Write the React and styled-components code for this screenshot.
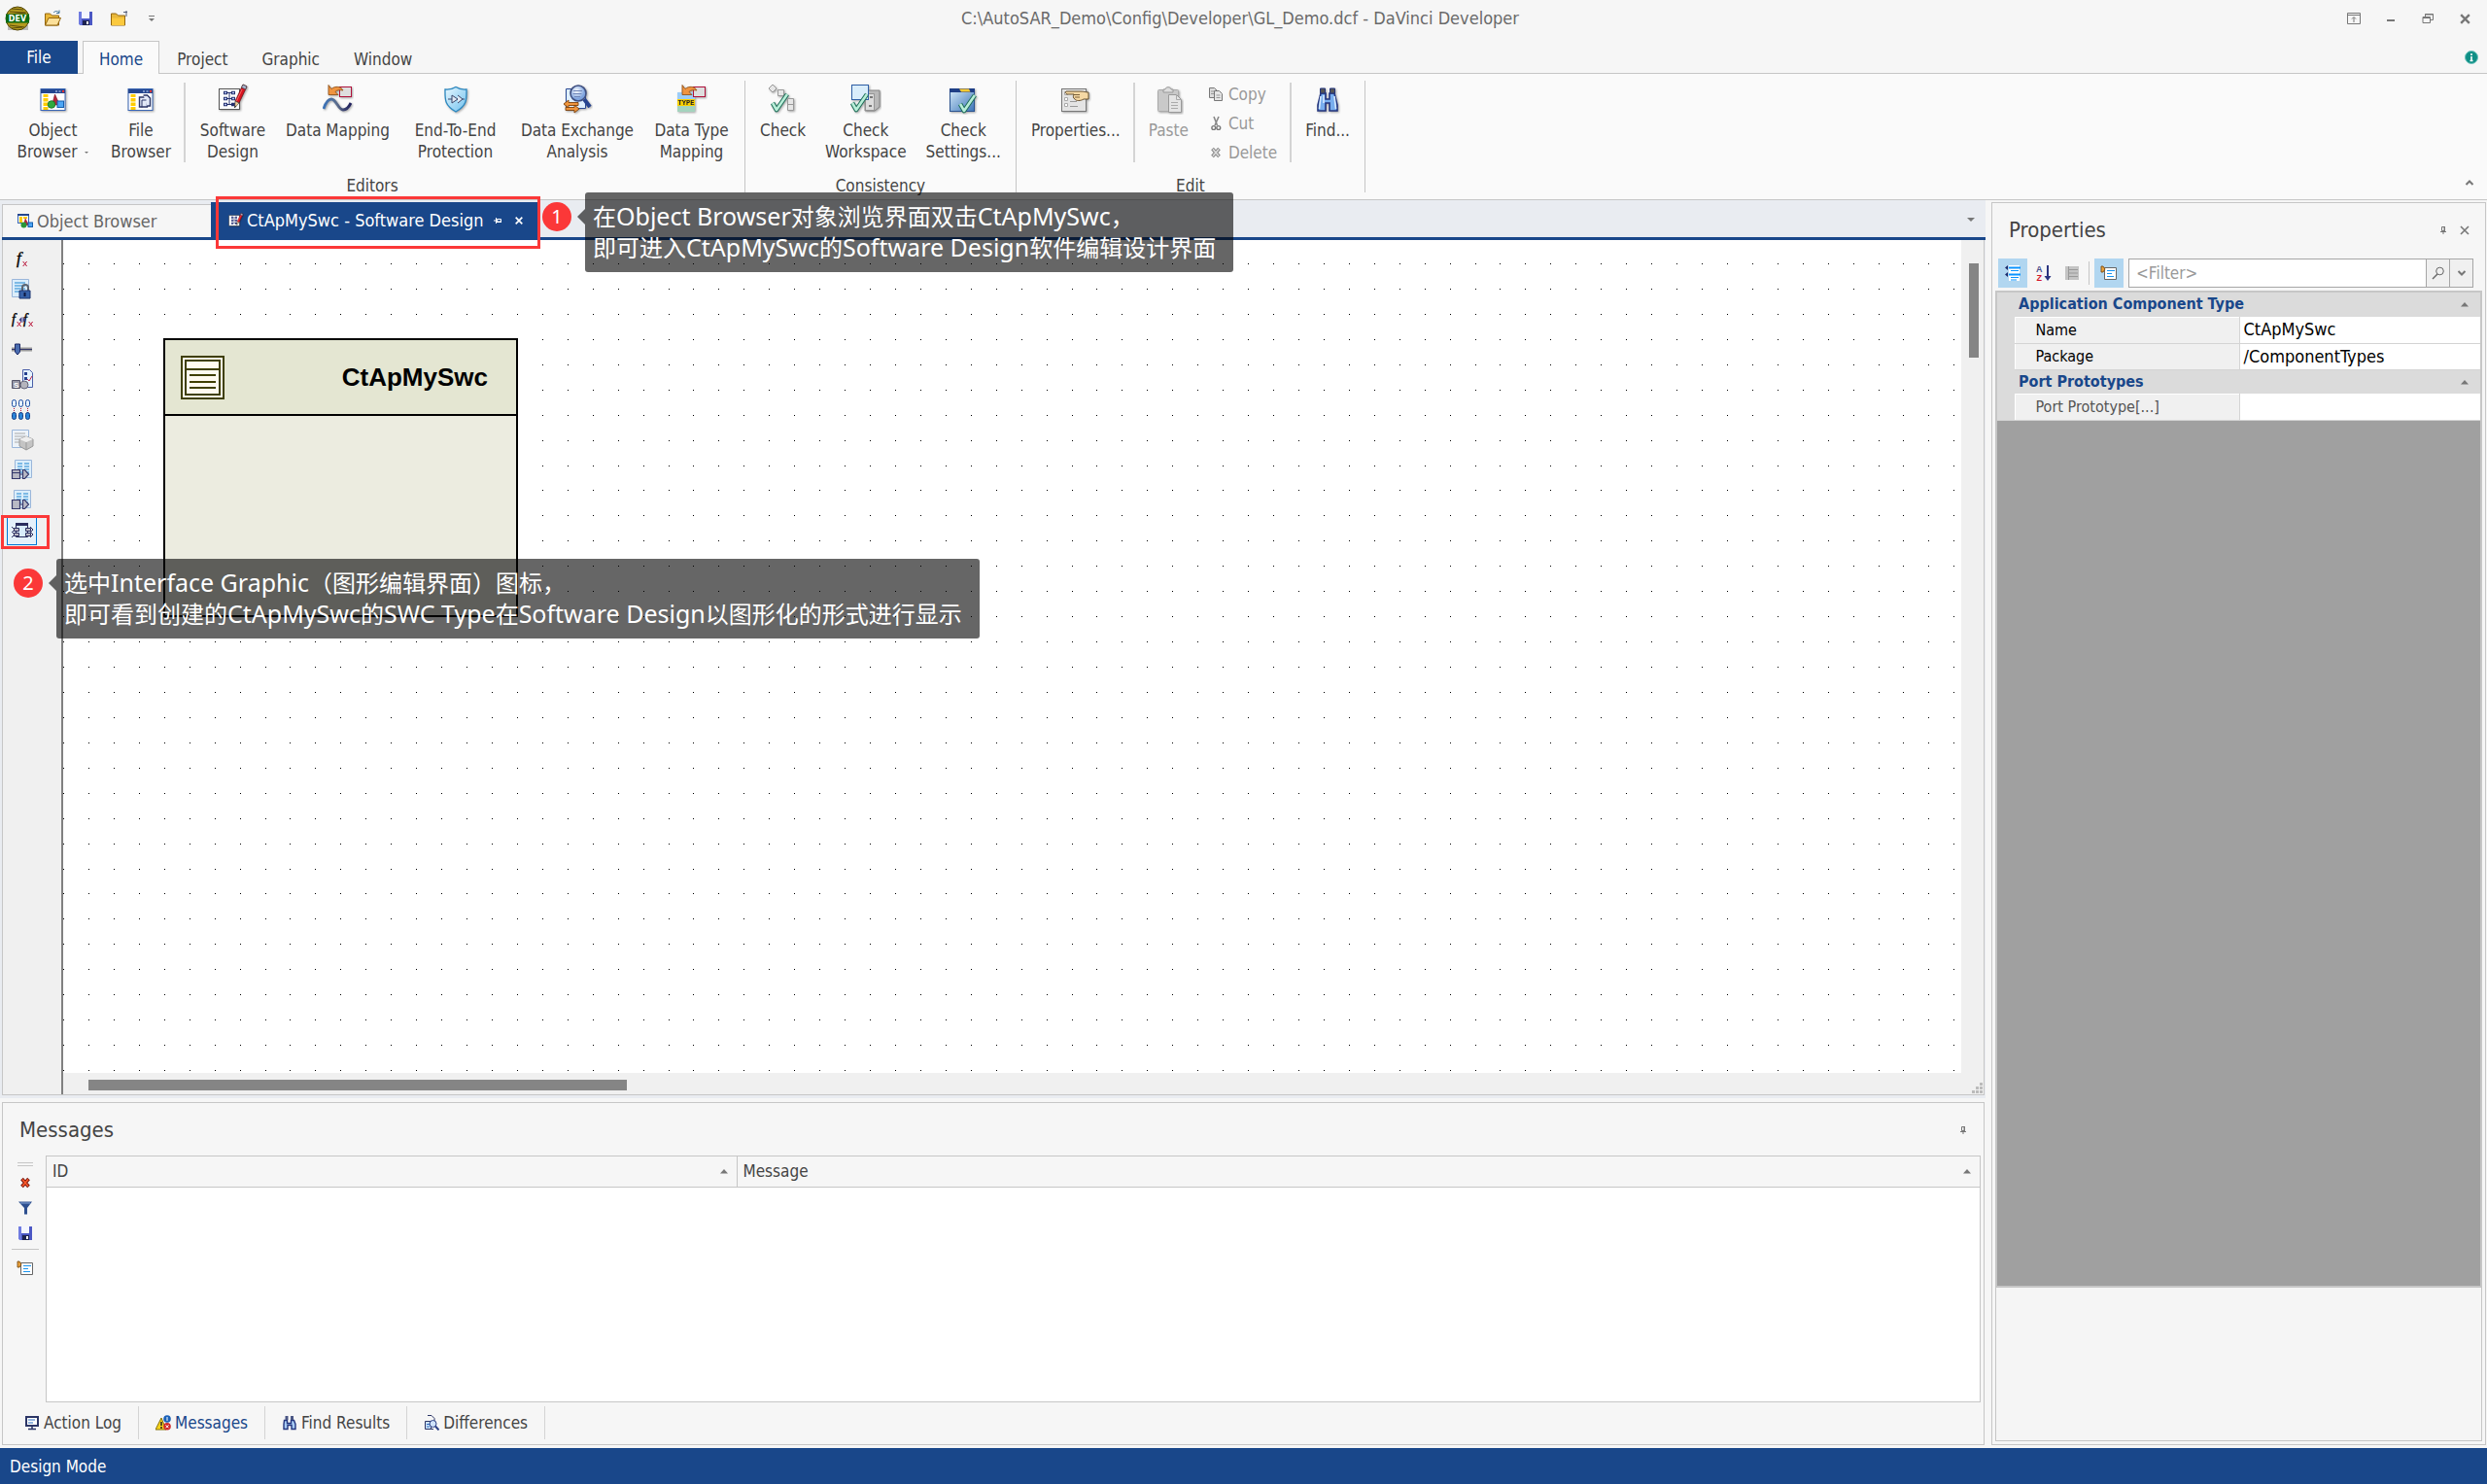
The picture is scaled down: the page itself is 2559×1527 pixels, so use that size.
import React, { useState } from 'react';
import styled, { createGlobalStyle } from 'styled-components';

const blue = '#19478a';
const line = '#c6c6c6';
const uiFont = "'DejaVu Sans Condensed', 'Noto Sans', sans-serif";

const GlobalStyle = createGlobalStyle`
  * { box-sizing: border-box; }
  body {
    margin: 0;
    background: #f6f6f6;
    color: #444;
    font-family: ${uiFont};
    font-size: 17px;
    line-height: 22px;
  }
  button, input {
    font: inherit;
    color: inherit;
    margin: 0;
  }
  button {
    border: 0;
    background: none;
    padding: 0;
  }
  svg { display: block; flex: none; }
`

const Page = styled.div`
  position: relative;
  display: flex;
  flex-direction: column;
  height: 100vh;
  min-height: 900px;
  overflow: hidden;
`

/* ---------- title bar ---------- */

const TitleBar = styled.header`
  display: grid;
  grid-template-columns: 1fr auto 1fr;
  align-items: center;
  height: 42px;
  flex: none;
  padding: 0 12px 4px 5px;
`

const QuickAccess = styled.div`
  display: flex;
  align-items: center;
  gap: 12px;
`

const WindowTitle = styled.h1`
  margin: 0;
  font-size: 18px;
  font-weight: normal;
  color: #6a6a6a;
`

const WindowButtons = styled.div`
  display: flex;
  justify-content: flex-end;
  gap: 16px;
`

const IconButton = styled.button`
  display: flex;
  align-items: center;
  justify-content: center;
  width: ${props => props.$w || 22}px;
  height: ${props => props.$h || 22}px;
`

/* ---------- ribbon ---------- */

const RibbonTabs = styled.nav`
  display: flex;
  align-items: stretch;
  gap: 1px;
  height: 34px;
  flex: none;
  border-bottom: 1px solid ${line};
  padding-right: 9px;
`

const FileTab = styled.button`
  width: 80px;
  margin-right: 4px;
  margin-bottom: -1px;
  background: ${blue};
  color: #fff;
`

const RibbonTab = styled.button`
  padding: 2px 16px 0;
  margin-bottom: -1px;
  color: ${props => props.$active ? blue : '#444'};
  background: ${props => props.$active ? '#fafafa' : 'transparent'};
  border: 1px solid ${props => props.$active ? line : 'transparent'};
  border-bottom: 0;
`

const TabsEnd = styled.div`
  display: flex;
  align-items: center;
  margin-left: auto;
`

const Ribbon = styled.section`
  display: flex;
  height: 130px;
  flex: none;
  background: #fafafa;
  border-bottom: 1px solid ${line};
`

const Group = styled.div`
  display: flex;
  flex-direction: column;
  margin: 7px 0;
  padding: 0 5px;
  border-right: 1px solid ${line};
`

const GroupItems = styled.div`
  display: flex;
  flex: 1;
`

const GroupName = styled.div`
  height: 22px;
  margin-bottom: -4px;
  text-align: center;
`

const BigButton = styled.button`
  display: flex;
  flex-direction: column;
  align-items: center;
  width: ${props => props.$w ? `${props.$w}px` : 'auto'};
  padding: 3px ${props => props.$w ? 0 : 10}px 0;
  gap: 5px;
  color: #444;
  white-space: pre-line;
  &:disabled { color: #999; }
`

const ButtonText = styled.span`
  text-align: center;
`

const DropMark = styled.i`
  display: inline-block;
  margin: 0 0 4px 8px;
  border: 2px solid transparent;
  border-top-color: #777;
  border-bottom: 0;
`

const Divider = styled.div`
  width: 2px;
  height: 82px;
  margin: 2px 4px 0 3px;
  background: #d4d4d4;
`

const SmallList = styled.div`
  display: flex;
  flex-direction: column;
  margin-top: -1px;
  padding: 0 10px;
`

const SmallButton = styled.button`
  display: flex;
  align-items: center;
  gap: 5px;
  height: 30px;
  &:disabled { color: #999; }
`

const RibbonEnd = styled.div`
  display: flex;
  align-items: flex-end;
  margin: 0 7px 6px auto;
`

/* ---------- workspace ---------- */

const Workspace = styled.main`
  display: flex;
  flex: 1;
  min-height: 0;
  gap: 6px;
  padding: 2px 1px 3px 0;
`

const LeftColumn = styled.div`
  display: flex;
  flex-direction: column;
  flex: 1;
  min-width: 0;
  gap: 4px;
`

const Editor = styled.section`
  display: flex;
  flex-direction: column;
  flex: 1;
  min-height: 0;
  margin-top: -2px;
  padding: 2px 0 3px 2px;
  background: #e9ecf1;
`

const EditorTabs = styled.div`
  display: flex;
  align-items: flex-end;
  height: 39px;
  flex: none;
  border-bottom: 3px solid ${blue};
`

const EditorTab = styled.button`
  display: flex;
  align-items: center;
  gap: ${props => props.$active ? 3 : 4}px;
  width: ${props => props.$active ? 338 : 215}px;
  height: ${props => props.$active ? 36 : 34}px;
  padding: 1px 11px 0 ${props => props.$active ? 18 : 15}px;
  font-size: 18px;
  color: ${props => props.$active ? '#fff' : '#666'};
  background: ${props => props.$active ? blue : '#f6f6f6'};
  border: ${props => props.$active ? '0' : `1px solid ${line}`};
  border-width: 1px 0 0 1px;
`

const TabTools = styled.span`
  display: flex;
  align-items: center;
  gap: 6px;
  margin-left: auto;
`

const TabsMenu = styled.div`
  margin: 0 9px 8px auto;
`

const EditorBody = styled.div`
  display: flex;
  flex: 1;
  min-height: 0;
  margin-right: 1px;
  border: 1px solid ${line};
  border-top: 0;
  background: #f0f0f0;
`

const ToolStrip = styled.div`
  display: flex;
  flex-direction: column;
  width: 62px;
  flex: none;
  padding: 4px 0 0 4px;
  border-right: 2px solid #808080;
`

const Tool = styled.button`
  display: flex;
  align-items: center;
  justify-content: center;
  width: 31px;
  height: 31px;
  border: 1px solid ${props => props.$pressed ? '#0078d7' : 'transparent'};
  background: ${props => props.$pressed ? '#e5f1fb' : 'none'};
`

const CanvasArea = styled.div`
  display: grid;
  grid-template-columns: 1fr 23px;
  grid-template-rows: 1fr 22px;
  flex: 1;
  min-width: 0;
`

const Canvas = styled.div`
  position: relative;
  overflow: hidden;
  background: #fff;
`

const HScroll = styled.div`
  display: flex;
  align-items: center;
  padding: 2px 26px 0;
`

const VScroll = styled.div`
  display: flex;
  justify-content: center;
  padding: 24px 0 0 2px;
`

const Thumb = styled.div`
  width: ${props => props.$vertical ? 10 : 554}px;
  height: ${props => props.$vertical ? 97 : 11}px;
  background: #858585;
`

const Corner = styled.div`
  display: flex;
  align-items: flex-end;
  justify-content: flex-end;
`

const Block = styled.div`
  position: absolute;
  left: 103px;
  top: 101px;
  width: 365px;
  height: 287px;
  border: 2px solid #000;
  background: #ecece0;
`

const BlockHead = styled.div`
  display: flex;
  align-items: center;
  justify-content: space-between;
  height: 78px;
  padding: 0 29px 0 16px;
  background: #e4e6d2;
  border-bottom: 2px solid #000;
  color: #000;
  font: bold 26px/30px 'Liberation Sans', sans-serif;
`

/* ---------- panels ---------- */

const Panel = styled.section`
  display: flex;
  flex-direction: column;
  border: 1px solid ${line};
  background: #f6f6f6;
`

const MessagesPanel = styled(Panel)`
  height: 353px;
  flex: none;
  margin: 0 1px 0 2px;
`

const PropertiesPanel = styled(Panel)`
  width: 509px;
  flex: none;
`

const PanelHead = styled.div`
  display: flex;
  align-items: center;
  height: 54px;
  flex: none;
  padding: 2px 10px 0 17px;
`

const PanelTitle = styled.h2`
  margin: 0 auto 0 0;
  font-size: 22px;
  line-height: 28px;
  font-weight: normal;
`

const MessagesBody = styled.div`
  display: flex;
  flex: 1;
  min-height: 0;
  padding-right: 3px;
`

const SideTools = styled.div`
  display: flex;
  flex-direction: column;
  align-items: center;
  width: 44px;
  flex: none;
  padding: 7px 0 0 2px;
`

const Grip = styled.div`
  width: 16px;
  height: 4px;
  margin-bottom: 4px;
  border: 1px solid ${line};
  border-width: 1px 0;
`

const Rule = styled.div`
  width: 28px;
  height: 1px;
  margin: 3px 0 6px;
  background: ${line};
`

const MessageFrame = styled.div`
  flex: 1;
  border: 1px solid ${line};
  background: #fff;
`

const MessageTable = styled.table`
  width: 100%;
  table-layout: fixed;
  border-collapse: collapse;
  background: #f6f6f6;
  th {
    height: 31px;
    padding: 0 9px 0 6px;
    font-weight: normal;
    text-align: left;
    border-bottom: 1px solid ${line};
  }
  th + th { border-left: 1px solid ${line}; }
`

const HeadCell = styled.span`
  display: flex;
  align-items: center;
  justify-content: space-between;
`

const BottomTabs = styled.div`
  display: flex;
  height: 34px;
  flex: none;
  margin: 4px 0 5px 5px;
`

const BottomTab = styled.button`
  display: flex;
  align-items: center;
  gap: 4px;
  padding: 0 17px;
  border-right: 1px solid #d4d4d4;
  color: ${props => props.$active ? blue : '#444'};
`

/* ---------- properties ---------- */

const PropertyTools = styled.div`
  display: flex;
  align-items: center;
  gap: 5px;
  height: 30px;
  flex: none;
  margin: 3px 12px 3px 6px;
`

const ToolToggle = styled.button`
  display: flex;
  align-items: center;
  justify-content: center;
  width: ${props => props.$on ? 30 : 24}px;
  height: 30px;
  background: ${props => props.$on ? '#b1d6f0' : 'none'};
`

const ToolLine = styled.div`
  width: 1px;
  height: 24px;
  background: ${line};
`

const Filter = styled.label`
  display: flex;
  flex: 1;
  height: 30px;
  border: 1px solid #a6a6a6;
  background: #fff;
  input {
    flex: 1;
    min-width: 0;
    padding: 0 7px;
    border: 0;
    outline: 0;
    background: none;
  }
  input::placeholder { color: #999; opacity: 1; }
  button {
    display: flex;
    align-items: center;
    justify-content: center;
    width: 24px;
    border-left: 1px solid #a6a6a6;
    background: #f0f0f0;
  }
`

const PropertyArea = styled.div`
  flex: 1;
  margin: 0 3px;
  border: 2px solid ${line};
  background: #a0a0a0;
`

const PropertyTable = styled.table`
  width: 100%;
  table-layout: fixed;
  border-collapse: collapse;
  background: #dbdbdb;
  color: #000;
  line-height: 22px;
  border-bottom: 1px solid #d4d4d4;
`

const Category = styled.tr`
  height: 25px;
  th {
    padding: 0 12px 0 22px;
    font-size: 16px;
    text-align: left;
    color: ${blue};
  }
`

const Property = styled.tr`
  height: 27px;
  th {
    padding: 0 0 0 21px;
    font-size: 16px;
    font-weight: normal;
    text-align: left;
    color: ${props => props.$muted ? '#555' : '#000'};
    background: #f0f0f0;
    border: 1px solid #d4d4d4;
    border-left-color: #fff;
    border-top-color: #fff;
  }
  td {
    padding: 0 4px;
    font-size: 18px;
  }
  th + td {
    background: #fff;
    border-bottom: 1px solid #d4d4d4;
  }
`

const Description = styled.div`
  height: 158px;
  flex: none;
  margin: 0 3px 3px;
  border: 1px solid ${line};
  border-top: 0;
  background: #f5f5f5;
`

const StatusBar = styled.footer`
  display: flex;
  align-items: center;
  height: 37px;
  flex: none;
  padding: 0 10px;
  background: ${blue};
  color: #fff;
`

/* ---------- annotations floating above the window ---------- */

const Marker = styled.div`
  position: absolute;
  left: ${props => props.$x}px;
  top: ${props => props.$y}px;
  width: ${props => props.$w}px;
  height: ${props => props.$h}px;
  border: 3px solid #fb3838;
  pointer-events: none;
`

const Badge = styled.span`
  display: flex;
  align-items: center;
  justify-content: center;
  width: 30px;
  height: 30px;
  margin-top: 10px;
  border-radius: 50%;
  background: #fb3838;
  color: #fff;
  font: 20px/30px 'Noto Sans', sans-serif;
`

const Note = styled.div`
  position: absolute;
  left: ${props => props.$x}px;
  top: ${props => props.$y}px;
  display: flex;
  align-items: flex-start;
`

const NoteArrow = styled.i`
  margin: 17px 0 0 6px;
  border: 8px solid transparent;
  border-right-color: rgba(0, 0, 0, 0.6);
  border-left: 0;
`

const NoteText = styled.div`
  padding: 9px 18px 9px 8px;
  border-radius: 3px;
  background: rgba(0, 0, 0, 0.6);
  color: #fff;
  font: 24px/32px 'Noto Sans', 'Noto Sans CJK SC', sans-serif;
  white-space: pre;
`

const NoteLine = styled.p`
  margin: 0;
  height: 32px;
`

const Latin = styled.span`
  font-size: 25px;
  line-height: 24px;
`

/* ---------- icons ---------- */

const Svg = ({ s = 32, w, h, box = 32, children }) => (
  <svg width={w || s} height={h || s} viewBox={`0 0 ${box} ${box}`} fill="none" aria-hidden="true">{children}</svg>
)

const Shadow = { filter: 'drop-shadow(1px 1px 1px rgba(0,0,0,.35))' }

const Win = () => (
  <g>
    <rect x="3" y="5.500" width="25" height="22" fill="#fff" stroke="#3b66b4" />
    <path d="M3 6h25v4H3z" fill="#24468f" />
    <path d="M18 8h2M21.500 8h2" stroke="#cfe0ff" />
    <path d="M25 8h2" stroke="#f33" strokeWidth="2" />
    <path d="M5.500 11h5v16h-5z" fill="#fc0" />
    <path d="M5 14.500h6M5 19h6M5 23.500h6" stroke="#fff" />
  </g>
)

const ObjectBrowserIcon = ({ s }) => (
  <Svg s={s}>
    <g style={Shadow}>
      <Win />
      <path d="M17.500 11l5 11h-8z" fill="#b3263a" stroke="#7d1524" strokeWidth=".6" />
      <circle cx="14" cy="21.500" r="3.800" fill="#2faa3d" stroke="#156b21" strokeWidth=".8" />
      <rect x="20" y="18" width="6.500" height="6.500" fill="#4da6f5" stroke="#155fae" />
    </g>
  </Svg>
)

const TabBrowserIcon = () => (
  <Svg s={16} box={16}>
    <rect x=".5" y=".5" width="11" height="9" fill="#fff" stroke="#3b66b4" />
    <path d="M0 1h12" stroke="#24468f" strokeWidth="2" />
    <path d="M2 3h3v6H2zM6 3h4v2H6z" fill="#fc0" />
    <path d="M8 4l4 8H6z" fill="#b3263a" />
    <circle cx="6.500" cy="11.500" r="3" fill="#2a9638" />
    <rect x="11" y="9" width="4.500" height="4.500" fill="#4da6f5" stroke="#155fae" />
  </Svg>
)

const FileBrowserIcon = () => (
  <Svg>
    <g style={Shadow}>
      <Win />
      <path d="M14.500 14h6l2 2v8h-8z" fill="#e3e9f8" stroke="#2b3566" strokeWidth="1.400" />
      <path d="M18.500 12h4l3 3v8h-3" fill="#e3e9f8" stroke="#2b3566" strokeWidth="1.400" />
      <path d="M17 24.500v-7.500h4.500" stroke="#2b3566" />
    </g>
  </Svg>
)

const Pencil = () => (
  <g>
    <path d="M26 1l4 2-8 17-4-2z" fill="#d8131f" stroke="#5c1016" strokeWidth=".7" />
    <path d="M26 1l4 2-1.500 3-4-2z" fill="#a8b3cf" stroke="#333" strokeWidth=".6" />
    <path d="M18 18l4 2-4.500 5z" fill="#f0cf9a" stroke="#333" strokeWidth=".6" />
    <path d="M17.700 22.500l1.300.7-1.800 2z" fill="#222" />
    <path d="M25 6l-5.500 12" stroke="#ff6a6a" strokeWidth=".9" />
  </g>
)

const SoftwareDesignIcon = ({ s }) => (
  <Svg s={s}>
    <g style={Shadow}>
      <rect x="1.500" y="5.500" width="21" height="21" fill="#fff" stroke="#555" />
      <path d="M6 9.500h4M6 15.500h4M6 21.500h4M14 9.500h4M14 15.500h4M14 21.500h4" stroke="#24306e" strokeWidth="3.600" />
      <path d="M7 9.500h2M7 15.500h2M7 21.500h2M15 9.500h2M15 15.500h2" stroke="#b9c6f5" strokeWidth="1.500" />
      <path d="M10 9.500h4M10 15.500h4M10 21.500h4M12 9.500v12" stroke="#24306e" />
      <Pencil />
    </g>
  </Svg>
)

const MapArrow = () => (
  <g>
    <rect x="17.500" y="3.500" width="12" height="10" fill="#dedede" stroke="#b0103a" />
    <path d="M6 1.500v10h10l-3-3c2-2 4-2 8-1.500-2-4-8-5-12-1.500z" fill="#ef9440" stroke="#8a4a10" strokeWidth=".8" />
  </g>
)

const DataMappingIcon = () => (
  <Svg>
    <defs>
      <linearGradient id="wave" x1="0" x2="1"><stop stopColor="#3a72b8" /><stop offset=".5" stopColor="#5c6d8c" /><stop offset="1" stopColor="#1e1e5c" /></linearGradient>
    </defs>
    <g style={Shadow}>
      <MapArrow />
      <path d="M1 26c2-6 5-10 8-10 5 0 7 11 12 11 4 0 6-3 8-7" stroke="url(#wave)" strokeWidth="2.800" />
    </g>
  </Svg>
)

const ShieldIcon = () => (
  <Svg>
    <defs>
      <linearGradient id="shield" x2="1" y2="1"><stop stopColor="#e8f8ff" /><stop offset="1" stopColor="#6fc0ee" /></linearGradient>
    </defs>
    <g style={Shadow}>
      <path d="M16 3.500c3 2 6 3 11 2.500 0 10 1 16-11 23C4 22 5 16 5 6c5 .5 8-.5 11-2.500z" fill="url(#shield)" stroke="#2c88c0" strokeWidth="1.300" />
      <path d="M8 16h4M12 12v8l6-4zM18 12l5 4-5 4M23 16h2" stroke="#3a4468" fill="#dfe9f4" />
    </g>
  </Svg>
)

const ExchangeIcon = () => (
  <Svg>
    <defs>
      <radialGradient id="lens" cx=".4" cy=".35"><stop stopColor="#fff" /><stop offset="1" stopColor="#7fa4df" /></radialGradient>
    </defs>
    <g style={Shadow}>
      <path d="M4.500 5.500h16l4 5v15h-20z" fill="#dff0ff" stroke="#2b4a94" />
      <path d="M23 16l6 8" stroke="#27448f" strokeWidth="4" />
      <circle cx="17" cy="10" r="8" fill="url(#lens)" stroke="#3f4f80" strokeWidth="1.600" />
      <path d="M12 7.500h9M11.500 10.500h9M13 13.500h6" stroke="#6e85b8" />
      <path d="M2 21l5-4v2.500h10v3H7V25zM18 26l-5 4v-2.500H4v-3h9V22z" fill="#f0953c" stroke="#7d420c" strokeWidth=".9" />
    </g>
  </Svg>
)

const TypeIcon = () => (
  <Svg>
    <g style={Shadow}>
      <path d="M1 9h18v8H1z" fill="#9ccdf8" />
      <path d="M1 16h18v7H1z" fill="#fbd000" />
      <path d="M1 23h18v6H1z" fill="#a4d3bd" />
      <text x="10" y="21.800" textAnchor="middle" fontFamily="Liberation Mono, monospace" fontWeight="bold" fontSize="7" fill="#222">TYPE</text>
      <MapArrow />
    </g>
  </Svg>
)

const Tick = ({ x = 0, y = 0 }) => (
  <g transform={`translate(${x} ${y})`}>
    <path d="M5 18l4 7L20 9" stroke="#1d6e58" strokeWidth="4.600" strokeLinejoin="round" />
    <path d="M5 18l4 7L20 9" stroke="#b8eed8" strokeWidth="2.600" strokeLinejoin="round" />
  </g>
)

const CheckIcon = () => (
  <Svg>
    <g style={Shadow}>
      <path d="M5 1l4 4-4 4-4-4z" fill="#e6e6e6" stroke="#999" />
      <path d="M10.500 6.500h6v6h-6zM20.500 15.500h6v12h-6z" fill="#e6e6e6" stroke="#999" />
      <path d="M20 21.500h7" stroke="#999" />
      <Tick x={0} y={2} />
    </g>
  </Svg>
)

const CheckWorkspaceIcon = () => (
  <Svg>
    <g style={Shadow}>
      <path d="M15 10l4-3h11v17l-5 4H15z" fill="#b9b9b9" stroke="#777" strokeWidth=".8" />
      <path d="M15.500 10.500h9v17h-9z" fill="#dcdcdc" stroke="#888" strokeWidth=".8" />
      <path d="M20 14h3M19 23h3" stroke="#777" strokeWidth="2" />
      <rect x="1.500" y="1.500" width="17" height="15" fill="#d9edfb" stroke="#2e5fa6" />
      <Tick x={-3} y={2} />
    </g>
  </Svg>
)

const CheckSettingsIcon = () => (
  <Svg>
    <defs>
      <linearGradient id="folder" y2="1" x2="1"><stop stopColor="#d5ebfa" /><stop offset="1" stopColor="#3c74b8" /></linearGradient>
    </defs>
    <g style={Shadow}>
      <rect x="2.500" y="5.500" width="25" height="23" fill="url(#folder)" stroke="#2a5390" />
      <path d="M2 5h26v4H2z" fill="#1f3f86" />
      <path d="M12 5.500h10l1.500 3H14z" fill="#fc3" />
      <Tick x={8} y={3} />
    </g>
  </Svg>
)

const PropertiesIcon = () => (
  <Svg>
    <g style={Shadow}>
      <rect x="1.500" y="5.500" width="25" height="23" fill="#e4e4e4" stroke="#777" />
      <path d="M4.500 14.500h3v3h-3zM4.500 20.500h3v3h-3zM4.500 8.500h3v3h-3z" fill="#fff" stroke="#aaa" />
      <path d="M10 18.500h7M10 23.500h8" stroke="#999" />
      <path d="M6 8h15c4 0 5 1 8 1v7h-5c-3 2-8 2-9 0-2-1-2-3-1-5H7c-2-1-2-2-1-3z" fill="#f5d8a4" stroke="#5a4320" strokeWidth=".9" />
      <path d="M14 11.500h6M15 14h5" stroke="#5a4320" strokeWidth=".8" />
    </g>
  </Svg>
)

const PasteIcon = () => (
  <Svg>
    <g style={Shadow}>
      <rect x="5.500" y="6.500" width="21" height="22" rx="1" fill="#c9c9c9" stroke="#aaa" />
      <path d="M11 9V6h2c0-3 6-3 6 0h2v3z" fill="#ddd" stroke="#999" />
      <path d="M16.500 11.500h8l5 5v13h-13z" fill="#e4e4e4" stroke="#999" />
      <path d="M24.500 11.500v5h5M19 19.500h7M19 22.500h7M19 25.500h7" stroke="#aaa" />
    </g>
  </Svg>
)

const CopyIcon = () => (
  <Svg s={16} box={16}>
    <path d="M1.500 1.500h5l3 3v7h-8z" fill="#ddd" stroke="#777" />
    <path d="M6.500 4.500h5l3 3v7h-8z" fill="#e6e6e6" stroke="#777" />
    <path d="M3 5h3M3 7.500h3M8.500 9h4M8.500 11.500h4" stroke="#999" />
  </Svg>
)

const CutIcon = () => (
  <Svg s={16} box={16}>
    <path d="M6 1l3.500 9M11 1L7 10" stroke="#888" strokeWidth="1.600" />
    <circle cx="5.800" cy="12.500" r="1.900" stroke="#777" strokeWidth="1.400" />
    <circle cx="10.800" cy="12.500" r="1.900" stroke="#777" strokeWidth="1.400" />
  </Svg>
)

const DeleteIcon = ({ dark = '#888', light = '#ddd' }) => (
  <Svg s={16} box={16}>
    <path d="M4.500 4l7 8M11.500 4l-7 8" stroke={dark} strokeWidth="3.600" />
    <path d="M5 4.500l6 7M11 4.500l-6 7" stroke={light} strokeWidth="1.600" />
  </Svg>
)

const Binoculars = () => (
  <Svg>
    <g style={Shadow}>
      <path d="M9 10h5v6h4v-6h5l3 12v6h-8v-8h-4v8H6v-6z" fill="#78aeee" stroke="#23357e" strokeWidth="1.600" />
      <path d="M9 13l-1.500 13M23 13l1.500 13M12 12v8" stroke="#d5e8ff" strokeWidth="1.600" />
      <path d="M8.500 5h5v5h-5zM18.500 5h5v5h-5z" fill="#555" stroke="#23357e" />
    </g>
  </Svg>
)

const AppLogo = () => (
  <Svg s={26} box={26}>
    <rect x="3" y="20" width="21" height="5" fill="#bbb" />
    <circle cx="13" cy="13" r="12" fill="#b49a1e" stroke="#54470a" />
    <path d="M5 6l16 1M4 9l18-2M7 3l12 1M5 20l15 2M7 23l11-1" stroke="#5a4c0c" />
    <path d="M1 8.500h24v9H1z" fill="#0b6b12" />
    <text x="13" y="16" textAnchor="middle" fontFamily="DejaVu Sans, sans-serif" fontWeight="bold" fontSize="8" fill="#fff">DEV</text>
  </Svg>
)

const FolderIcon = ({ open }) => (
  <Svg w={20} h={20} box={20}>
    <path d="M2.500 17V5h5l2 2h7v10z" fill="#e9b83a" stroke="#94660d" />
    {open
      ? <path d="M2.500 17L6 9.500h12.500L15 17z" fill="#fbe09a" stroke="#94660d" />
      : <path d="M3 9.500h13V17H3z" fill="#fbc93e" />}
    {open
      ? <path d="M11 4c2-2 4-2 6 0M17 1.500v3h-3" stroke="#3d7399" />
      : <path d="M18 8V2M15 3.500h4" stroke="#555f7a" />}
  </Svg>
)

const SaveIcon = () => (
  <Svg s={16} box={16}>
    <path d="M1 1h14v14H2.500L1 13.500z" fill="#4b57c4" />
    <path d="M1 1h3v14H2.500L1 13.500z" fill="#6f7be0" />
    <path d="M4 1h8v7H4z" fill="#f4f6ff" />
    <path d="M5 10h7v5H5z" fill="#1d2350" />
    <path d="M9 11h2v3H9z" fill="#fff" />
  </Svg>
)

const PinIcon = ({ color = '#777', side }) => (
  <Svg s={12} box={12}>
    <g transform={side ? 'rotate(90 6 6)' : undefined}>
      <path d="M4.500 2.500h3v4h-3z" stroke={color} />
      <path d="M6.500 2h1.500v5H6.500z" fill={color} />
      <path d="M3 7.500h6M6 7v3" stroke={color} />
    </g>
  </Svg>
)

const CloseIcon = ({ color = '#777', thick = 2, s = 12 }) => (
  <Svg s={s} box={12}><path d="M2 2l8 8M10 2l-8 8" stroke={color} strokeWidth={thick} /></Svg>
)

const Triangle = ({ down }) => (
  <Svg w={8} h={8} box={8}><path d={down ? 'M0 2h8L4 6z' : 'M0 6.500h8L4 2z'} fill="#777" /></Svg>
)

const FunnelIcon = () => (
  <Svg s={16} box={16}><path d="M1 1.500h14L10 8v6.500H7V8z" fill="#2d4f8f" /><path d="M3 3h10" stroke="#86a6d8" /></Svg>
)

const NoteIcon = () => (
  <Svg s={18} box={18}>
    <path d="M4.500 3.500h12v12h-12z" fill="#fff" stroke="#666" />
    <path d="M7 6.500h8M7 9.500h5M7 12.500h7" stroke="#1a94f0" />
    <path d="M1 2h2l2 3-2 3H1z" fill="#e9a03c" stroke="#6e4108" strokeWidth=".8" />
  </Svg>
)

const CategorizedIcon = () => (
  <Svg s={18} box={18}>
    <path d="M5 1h11v16H5z" fill="#fff" />
    <path d="M5 3.500h12M5 10.500h12" stroke="#0a94ff" strokeWidth="2" />
    <path d="M7 6.500h8M7 13.500h8M7 16h6" stroke="#0a94ff" />
    <path d="M4 1v5L1 3.500zM4 8v5l-3-2.500z" fill="#1c2a6b" />
  </Svg>
)

const SortIcon = () => (
  <Svg s={18} box={18}>
    <text x="1" y="8" fontFamily="Liberation Sans" fontWeight="bold" fontSize="9" fill="#4a4f8c">A</text>
    <text x="1.500" y="17" fontFamily="Liberation Sans" fontWeight="bold" fontSize="9" fill="#d3152c">Z</text>
    <path d="M13 1v13" stroke="#2b3580" strokeWidth="2" />
    <path d="M9.500 12h7L13 17z" fill="#2b3580" />
  </Svg>
)

const PagesIcon = () => (
  <Svg s={18} box={18}>
    <path d="M2 2h14v14H2z" fill="#c4c4c4" />
    <path d="M6 5.500h9M6 9h9M6 12.500h9M5.500 2v14" stroke="#999" />
  </Svg>
)

const SearchIcon = () => (
  <Svg s={14} box={14}><circle cx="8.500" cy="5" r="3.800" stroke="#666" /><path d="M6 8l-5 5" stroke="#666" strokeWidth="1.500" /></Svg>
)

const Chevron = ({ up }) => (
  <Svg s={10} box={10}><path d={up ? 'M1.500 7L5 3.500 8.500 7' : 'M1.500 3L5 6.500 8.500 3'} stroke="#777" strokeWidth="2" /></Svg>
)

const InfoIcon = () => (
  <Svg s={14} box={14}>
    <circle cx="7" cy="7" r="6.500" fill="#0f8f86" stroke="#6fc4bd" />
    <path d="M7 3v2M7 6v5M5.500 10.500h3" stroke="#fff" strokeWidth="1.600" />
  </Svg>
)

const Fx = ({ x = 0, size = 16 }) => (
  <g>
    <text x={x} y="16" fontFamily="Liberation Serif" fontStyle="italic" fontSize={size} fill="#000" stroke="#000" strokeWidth=".4">f</text>
    <path d={`M${x + size / 3 + 1} 14l4 5M${x + size / 3 + 5} 14l-4 5`} stroke="#b81237" />
  </g>
)

const Sheet = ({ x = 1, grey, split }) => (
  <g transform={`translate(${x} 1)`}>
    <path d="M.5.5h17v18H.5z" fill={grey ? '#edf3f9' : '#dceefb'} stroke="#9ab6da" />
    <path d={split ? 'M3 4h5M3 7h5M3 10h5M3 13h5M10 4h5M10 7h5M10 10h5M10 13h5' : 'M3 4h11M3 7h11M3 10h11M3 13h8'} stroke={grey ? '#aaa' : '#1f86d0'} />
  </g>
)

const Port = ({ y = 0 }) => (
  <g transform={`translate(0 ${y})`} stroke="#35386b" fill="#b9b9c4">
    <path d="M1.500 12.500h8v9h-8zM12.500 12.500h2l4 4.500-4 4.500h-2z" strokeWidth="1.200" />
    <path d="M9.500 17h3" />
  </g>
)

const tools = [
  { name: 'Runnables', icon: <Fx x={6} size={17} /> },
  { name: 'Exclusive areas', icon: <g><Sheet /><path d="M12 13v-3c0-4 6-4 6 0v3" stroke="#5d6470" strokeWidth="2" /><path d="M9 13h11v8H9z" fill="#3560a8" stroke="#1d3570" /><path d="M14.500 15v4" stroke="#0c1740" strokeWidth="2" /></g> },
  { name: 'Inter-runnable variables', icon: <g><Fx x={1} size={14} /><Fx x={13} size={14} /><path d="M11.500 9v6l-3-3zM12.500 9v6l3-3z" fill="#3d3f86" /></g> },
  { name: 'Calibration', icon: <g><path d="M1 11.500h21" stroke="#999" strokeWidth="4" /><path d="M1 11.500h21" stroke="#35386b" /><path d="M4.500 6h5v8L7 17l-2.500-3z" fill="#4a6db0" stroke="#1d2a66" /></g> },
  { name: 'Service needs', icon: <g><path d="M12.500 1.500h7l3 3v15h-10z" fill="#e4f3ff" stroke="#4b5fa8" /><path d="M14 4h3v3h-3zM14 9h3v3h-3z" fill="#24408e" /><path d="M17 11l2 2 3-5" stroke="#c0254a" /><path d="M1.500 12.500h8v8h-8z" fill="#9a9aa8" stroke="#55556a" /><text x="3" y="19.500" fontFamily="Liberation Sans" fontWeight="bold" fontSize="8" fill="#fff">S</text><circle cx="14" cy="17" r="4" fill="#b5b5bd" stroke="#66667a" /></g> },
  { name: 'Data access', icon: <g>{[3, 10, 17].map(x => <g key={x}><rect x={x - 1.500} y="1.500" width="4" height="7" rx="2" fill="#e5f1ff" stroke="#1b4da0" /><path d={`M${x + .5} 10v5`} stroke="#b81237" strokeDasharray="1 1" /><rect x={x - 1.500} y="14.500" width="4" height="7" rx="2" fill="#2b83d8" stroke="#173f88" /></g>)}</g> },
  { name: 'Implementation', icon: <g><Sheet grey /><path d="M9 11l7-3 7 3v7l-7 4-7-4z" fill="#c4c4c4" stroke="#999" /><path d="M9 11l7 3 7-3-7-3z" fill="#eee" /><path d="M16 14v8" stroke="#999" /></g> },
  { name: 'Port data access', icon: <g><Sheet x={4} split /><Port y={-1} /><path d="M1 14.500h9" stroke="#35386b" /></g> },
  { name: 'Port interface', icon: <g><Sheet x={3} split /><Port y={-1} /></g> },
  { name: 'Interface Graphic', icon: <g stroke="#2a2d5e"><path d="M5.500 4.500h12v14h-12z" fill="#d8ecfb" /><path d="M5 5.500h13" strokeWidth="3" /><path d="M3.500 9.500h5v3h-5zM3.500 14.500h5v3h-5zM15.500 9.500h5v3h-5zM15.500 14.500h5v3h-5z" fill="#b9b9c4" /><path d="M1 8l3 3-3 3M1 13l3 3-3 3M20 8l3 3-3 3M20 13l3 3-3 3" fill="none" /></g> },
]

const BlockIcon = () => (
  <svg width="45" height="45" viewBox="0 0 45 45" fill="#fffaf0" stroke="#3f3f00" strokeWidth="2">
    <path d="M1 1h43v43H1z" />
    <path d="M5 5h35v35H5z" />
    <path d="M5 14h35M9 20h27M9 27h27M9 33h27" />
  </svg>
)

const LogIcon = () => (
  <Svg s={16} box={16}>
    <path d="M2 2h12v9H2z" fill="#fff" stroke="#2b3566" strokeWidth="2" />
    <path d="M4 5h7M4 8h5" stroke="#2b6cc0" />
    <path d="M8 12v2M4 14.500h8" stroke="#2b3566" strokeWidth="1.500" />
  </Svg>
)

const MessagesIcon = () => (
  <Svg s={16} box={16}>
    <path d="M6 3l5 12H0z" fill="#f6d21c" stroke="#84700a" />
    <path d="M6 7v4M6 12v2" stroke="#222" strokeWidth="1.500" />
    <circle cx="12" cy="4" r="3.800" fill="#1c62b8" />
    <path d="M12 2v4" stroke="#fff" />
    <circle cx="12" cy="11.800" r="3.800" fill="#cf2a2a" />
    <path d="M10.500 10.300l3 3M13.500 10.300l-3 3" stroke="#fff" />
  </Svg>
)

const DiffIcon = () => (
  <Svg s={16} box={16}>
    <path d="M4 .5h4l3 3v6M2 14.500h8" stroke="#2b3566" />
    <path d="M1.500 6.500h6v8h-6z" fill="#cfe4fa" stroke="#2b3566" />
    <path d="M3 9.500h3M3 12h3" stroke="#2b6cc0" />
    <circle cx="9.500" cy="9" r="3.500" fill="#cfe2fb" stroke="#2b3f86" />
    <path d="M12 11.500l3.500 4" stroke="#2b3f86" strokeWidth="2" />
  </Svg>
)

const SmallBinoculars = () => (
  <Svg s={16} box={16}>
    <path d="M2.500 5.500h3v3h4v-3h3l1.500 4v5h-4v-4h-4v4h-4v-5z" fill="#a9cdf6" stroke="#23357e" strokeWidth="1.400" />
    <path d="M3.500 1h3v4h-3zM9 1h3v4H9z" fill="#4a5684" />
  </Svg>
)

/* ---------- grid of the drawing canvas ---------- */

const dotPath = () => {
  let d = '';
  for (let row = 0; row < 60; row++) {
    for (let col = 0; col < 120; col++) {
      d += `M${Math.round(col * 415 / 16)} ${24 + Math.round(row * 415 / 16)}h1v1h-1z`;
    }
  }
  return d;
}

const GridDots = () => (
  <svg width="100%" height="100%" shapeRendering="crispEdges" aria-hidden="true">
    <path d={dotPath()} fill="#000" />
  </svg>
)

const Big = ({ icon, text, w, drop, disabled }) => (
  <BigButton $w={w} disabled={disabled}>
    {icon}
    <ButtonText>{text}{drop && <DropMark />}</ButtonText>
  </BigButton>
)

const ribbonTabs = ['Home', 'Project', 'Graphic', 'Window']

const bottomTabs = [
  { name: 'Action Log', icon: <LogIcon /> },
  { name: 'Messages', icon: <MessagesIcon /> },
  { name: 'Find Results', icon: <SmallBinoculars /> },
  { name: 'Differences', icon: <DiffIcon /> },
]

const TitleArea = () => (
  <TitleBar>
    <QuickAccess>
      <AppLogo />
      <IconButton aria-label="Open"><FolderIcon open /></IconButton>
      <IconButton aria-label="Save"><SaveIcon /></IconButton>
      <IconButton aria-label="Close workspace"><FolderIcon /></IconButton>
      <IconButton aria-label="Customize"><Svg w={8} h={8} box={8}><path d="M1 1.500h6" stroke="#777" /><path d="M1 4h6L4 7z" fill="#777" /></Svg></IconButton>
    </QuickAccess>
    <WindowTitle>C:\AutoSAR_Demo\Config\Developer\GL_Demo.dcf - DaVinci Developer</WindowTitle>
    <WindowButtons>
      <IconButton aria-label="Ribbon options"><Svg s={14} box={14}><path d="M.5 1.500h13v11H.5zM0 3.500h14M7 11V6M5 7.500L7 5.500l2 2" stroke="#777" /></Svg></IconButton>
      <IconButton aria-label="Minimize"><Svg s={12} box={12}><path d="M2 8h8" stroke="#777" strokeWidth="2" /></Svg></IconButton>
      <IconButton aria-label="Restore"><Svg s={12} box={12}><path d="M3.500 4V1.500h8v6H9M1 4.500h7.500v6H1zM1 5.500h8M3 2h9" stroke="#777" /></Svg></IconButton>
      <IconButton aria-label="Close"><CloseIcon thick={2.2} s={13} /></IconButton>
    </WindowButtons>
  </TitleBar>
)

const RibbonArea = () => (
  <Ribbon>
    <Group>
      <GroupItems>
        <Big w={99} icon={<ObjectBrowserIcon />} text={'Object\nBrowser'} drop />
        <Big w={82} icon={<FileBrowserIcon />} text={'File\nBrowser'} />
        <Divider />
        <Big w={89} icon={<SoftwareDesignIcon />} text={'Software\nDesign'} />
        <Big w={127} icon={<DataMappingIcon />} text="Data Mapping" />
        <Big w={115} icon={<ShieldIcon />} text={'End-To-End\nProtection'} />
        <Big w={136} icon={<ExchangeIcon />} text={'Data Exchange\nAnalysis'} />
        <Big w={99} icon={<TypeIcon />} text={'Data Type\nMapping'} />
      </GroupItems>
      <GroupName>Editors</GroupName>
    </Group>
    <Group>
      <GroupItems>
        <Big icon={<CheckIcon />} text="Check" />
        <Big icon={<CheckWorkspaceIcon />} text={'Check\nWorkspace'} />
        <Big icon={<CheckSettingsIcon />} text={'Check\nSettings...'} />
      </GroupItems>
      <GroupName>Consistency</GroupName>
    </Group>
    <Group>
      <GroupItems>
        <Big icon={<PropertiesIcon />} text="Properties..." />
        <Divider />
        <Big icon={<PasteIcon />} text="Paste" disabled />
        <SmallList>
          <SmallButton disabled><CopyIcon />Copy</SmallButton>
          <SmallButton disabled><CutIcon />Cut</SmallButton>
          <SmallButton disabled><DeleteIcon />Delete</SmallButton>
        </SmallList>
        <Divider />
        <Big icon={<Binoculars />} text="Find..." />
      </GroupItems>
      <GroupName>Edit</GroupName>
    </Group>
    <RibbonEnd><IconButton aria-label="Collapse ribbon"><Chevron up /></IconButton></RibbonEnd>
  </Ribbon>
)

const EditorArea = () => (
  <Editor>
    <EditorTabs>
      <EditorTab><TabBrowserIcon />Object Browser</EditorTab>
      <EditorTab as="div" $active>
        <SoftwareDesignIcon s={16} />CtApMySwc - Software Design
        <TabTools>
          <IconButton $w={12} $h={12} aria-label="Pin"><PinIcon color="#fff" side /></IconButton>
          <IconButton $w={20} $h={20} aria-label="Close tab"><CloseIcon color="#fff" s={10} /></IconButton>
        </TabTools>
      </EditorTab>
      <TabsMenu><IconButton $w={12} $h={20} aria-label="Tab list"><Triangle down /></IconButton></TabsMenu>
    </EditorTabs>
    <EditorBody>
      <ToolStrip>
        {tools.map(tool => (
          <Tool key={tool.name} aria-label={tool.name} $pressed={tool.name === 'Interface Graphic'}>
            <Svg s={24} box={24}>{tool.icon}</Svg>
          </Tool>
        ))}
      </ToolStrip>
      <CanvasArea>
        <Canvas>
          <GridDots />
          <Block>
            <BlockHead><BlockIcon />CtApMySwc</BlockHead>
          </Block>
        </Canvas>
        <VScroll><Thumb $vertical /></VScroll>
        <HScroll><Thumb /></HScroll>
        <Corner>
          <Svg s={12} box={12}><path d="M8 0h3v3H8zM4 4h3v3H4zM8 4h3v3H8zM0 8h3v3H0zM4 8h3v3H4zM8 8h3v3H8z" fill="#bbb" /></Svg>
        </Corner>
      </CanvasArea>
    </EditorBody>
  </Editor>
)

const Messages = () => {
  const [tab, setTab] = useState('Messages')
  return (
    <MessagesPanel>
      <PanelHead>
        <PanelTitle>Messages</PanelTitle>
        <IconButton aria-label="Pin messages"><PinIcon /></IconButton>
      </PanelHead>
      <MessagesBody>
        <SideTools>
          <Grip />
          <IconButton $h={26} aria-label="Clear"><DeleteIcon dark="#7d1a10" light="#ff5a2a" /></IconButton>
          <IconButton $h={26} aria-label="Filter"><FunnelIcon /></IconButton>
          <IconButton $h={26} aria-label="Save messages"><SaveIcon /></IconButton>
          <Rule />
          <IconButton $h={26} aria-label="Details"><NoteIcon /></IconButton>
        </SideTools>
        <MessageFrame>
          <MessageTable>
            <colgroup><col width="710" /><col /></colgroup>
            <thead>
              <tr>
                <th><HeadCell>ID<Triangle /></HeadCell></th>
                <th><HeadCell>Message<Triangle /></HeadCell></th>
              </tr>
            </thead>
          </MessageTable>
        </MessageFrame>
      </MessagesBody>
      <BottomTabs>
        {bottomTabs.map(item => (
          <BottomTab key={item.name} $active={tab === item.name} onClick={() => setTab(item.name)}>
            {item.icon}{item.name}
          </BottomTab>
        ))}
      </BottomTabs>
    </MessagesPanel>
  )
}

const CategoryRow = ({ name }) => (
  <Category>
    <th colSpan="3"><HeadCell>{name}<Triangle /></HeadCell></th>
  </Category>
)

const PropertyRow = ({ name, value, muted }) => (
  <Property $muted={muted}>
    <td />
    <th>{name}</th>
    <td>{value}</td>
  </Property>
)

const Properties = () => {
  const [filter, setFilter] = useState('')
  return (
    <PropertiesPanel>
      <PanelHead>
        <PanelTitle>Properties</PanelTitle>
        <IconButton aria-label="Pin properties"><PinIcon /></IconButton>
        <IconButton aria-label="Close properties"><CloseIcon thick={1.6} /></IconButton>
      </PanelHead>
      <PropertyTools>
        <ToolToggle $on aria-label="Categorized"><CategorizedIcon /></ToolToggle>
        <ToolToggle aria-label="Alphabetical"><SortIcon /></ToolToggle>
        <ToolToggle aria-label="Property pages"><PagesIcon /></ToolToggle>
        <ToolLine />
        <ToolToggle $on aria-label="Description"><NoteIcon /></ToolToggle>
        <Filter>
          <input aria-label="Filter" placeholder="<Filter>" value={filter} onChange={e => setFilter(e.target.value)} />
          <button aria-label="Search"><SearchIcon /></button>
          <button aria-label="Filter history"><Chevron /></button>
        </Filter>
      </PropertyTools>
      <PropertyArea>
        <PropertyTable>
          <colgroup><col width="18" /><col width="231" /><col /></colgroup>
          <tbody>
            <CategoryRow name="Application Component Type" />
            <PropertyRow name="Name" value="CtApMySwc" />
            <PropertyRow name="Package" value="/ComponentTypes" />
            <CategoryRow name="Port Prototypes" />
            <PropertyRow name="Port Prototype[...]" muted />
          </tbody>
        </PropertyTable>
      </PropertyArea>
      <Description />
    </PropertiesPanel>
  )
}

// latin words inside the chinese notes are set one size up
const Step = ({ x, y, number, lines }) => (
  <Note $x={x} $y={y}>
    <Badge>{number}</Badge>
    <NoteArrow />
    <NoteText>
      {lines.map(text => (
        <NoteLine key={text}>
          {text.split(/([A-Za-z][A-Za-z ]*)/).map((part, idx) => idx % 2 ? <Latin key={idx}>{part}</Latin> : part)}
        </NoteLine>
      ))}
    </NoteText>
  </Note>
)

export default function App() {
  const [active, setActive] = useState('Home')
  return (
    <Page>
      <GlobalStyle />
      <TitleArea />
      <RibbonTabs>
        <FileTab>File</FileTab>
        {ribbonTabs.map(name => (
          <RibbonTab key={name} $active={active === name} onClick={() => setActive(name)}>{name}</RibbonTab>
        ))}
        <TabsEnd><IconButton $w={14} $h={14} aria-label="About"><InfoIcon /></IconButton></TabsEnd>
      </RibbonTabs>
      <RibbonArea />
      <Workspace>
        <LeftColumn>
          <EditorArea />
          <Messages />
        </LeftColumn>
        <Properties />
      </Workspace>
      <StatusBar>Design Mode</StatusBar>
      <Marker $x={222} $y={202} $w={334} $h={54} />
      <Marker $x={1} $y={530} $w={50} $h={35} />
      <Step x={558} y={198} number="1" lines={['在Object Browser对象浏览界面双击CtApMySwc，', '即可进入CtApMySwc的Software Design软件编辑设计界面']} />
      <Step x={14} y={575} number="2" lines={['选中Interface Graphic（图形编辑界面）图标，', '即可看到创建的CtApMySwc的SWC Type在Software Design以图形化的形式进行显示']} />
    </Page>
  )
}
